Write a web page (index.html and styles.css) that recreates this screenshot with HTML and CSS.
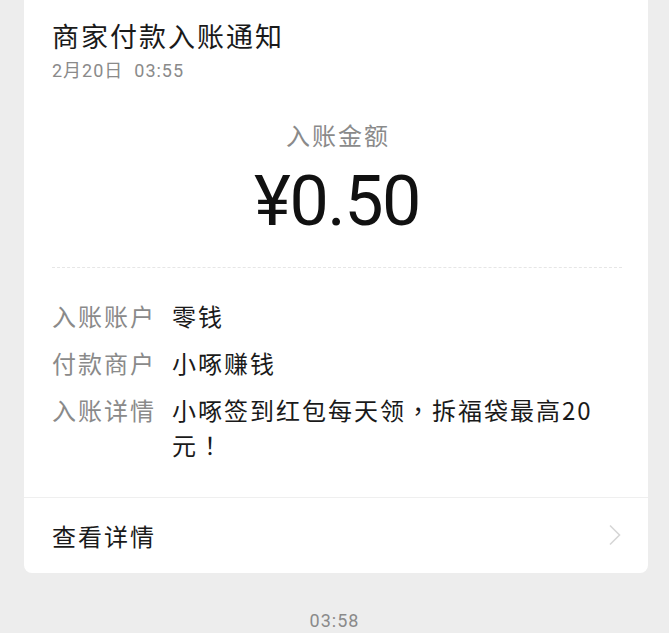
FILE: index.html
```html
<!DOCTYPE html>
<html lang="zh-CN">
<head>
<meta charset="utf-8">
<title>商家付款入账通知</title>
<link rel="stylesheet" href="styles.css">
</head>
<body>
<div class="card">
  <div class="head">
    <div class="title">商家付款入账通知</div>
    <div class="date">2月20日&nbsp;&nbsp;03:55</div>
    <div class="amount-label">入账金额</div>
    <div class="amount">¥0.50</div>
    <div class="dash"></div>
    <div class="rows">
      <div class="row"><div class="label">入账账户</div><div class="value">零钱</div></div>
      <div class="row"><div class="label">付款商户</div><div class="value">小啄赚钱</div></div>
      <div class="row"><div class="label">入账详情</div><div class="value">小啄签到红包每天领<span class="punct" lang="zh-Hant">，</span>拆福袋最高20元<span class="punct" lang="zh-Hant">！</span></div></div>
    </div>
  </div>
  <div class="link">
    <span class="link-text">查看详情</span>
    <svg class="chev" width="14" height="22" viewBox="0 0 14 22"><path d="M2 1.5 L11.5 11 L2 20.5" fill="none" stroke="#d6d6d6" stroke-width="1.6"/></svg>
  </div>
</div>
<div class="time">03:58</div>
</body>
</html>
```

FILE: styles.css
```css
html, body {
  margin: 0;
  padding: 0;
  background: #ededed;
  font-family: "Noto Sans CJK SC", "Noto Sans", sans-serif;
}
.card {
  margin: 0 21px 0 24px;
  background: #ffffff;
  border-radius: 0 0 8px 8px;
}
.head {
  padding: 18px 26px 35px 28px;
}
.title {
  font-size: 27px;
  line-height: 36px;
  letter-spacing: 2px;
  color: #1a1a1a;
}
.date {
  margin-top: 5px;
  font-family: "Roboto", "Noto Sans CJK SC", sans-serif;
  font-size: 18px;
  line-height: 24px;
  letter-spacing: 1px;
  color: #8a8a8a;
}
.amount-label {
  margin-top: 36px;
  padding-left: 2px;
  text-align: center;
  font-size: 24px;
  line-height: 32px;
  letter-spacing: 2px;
  color: #8a8a8a;
}
.amount {
  margin-top: 10px;
  text-align: center;
  font-family: "Roboto", sans-serif;
  font-size: 70px;
  line-height: 80px;
  letter-spacing: -1.5px;
  color: #111;
}
.dash {
  margin-top: 26px;
  border-top: 1px dashed #e6e6e6;
}
.rows {
  margin-top: 30px;
  display: flex;
  flex-direction: column;
  gap: 12px;
}
.row {
  display: flex;
  font-size: 24px;
  line-height: 35px;
  letter-spacing: 2px;
  text-spacing-trim: space-all;
}
.label {
  flex: 0 0 120px;
  color: #8a8a8a;
}
.value {
  flex: 1;
  color: #1a1a1a;
}
.punct {
  font-family: "Noto Sans CJK TC", "Noto Sans CJK SC", sans-serif;
}
.link {
  border-top: 1px solid #efefef;
  height: 75px;
  padding: 0 26px 0 28px;
  display: flex;
  align-items: center;
  justify-content: space-between;
}
.link-text {
  font-size: 24px;
  line-height: 35px;
  letter-spacing: 2px;
  color: #1a1a1a;
}
.chev {
  display: block;
  margin-top: -2px;
}
.time {
  margin-top: 36px;
  text-align: center;
  font-family: "Roboto", sans-serif;
  font-size: 18px;
  line-height: 24px;
  letter-spacing: 1px;
  color: #8a8a8a;
}
```
